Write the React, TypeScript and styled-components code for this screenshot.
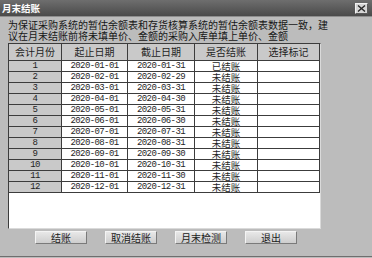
import React from "react";
import styled, { createGlobalStyle } from "styled-components";

const GlobalStyle = createGlobalStyle`
  html, body {
    margin: 0;
    padding: 0;
    background: #bcbcbc;
  }
  body {
    font-family: "Noto Sans CJK SC", "Liberation Sans", sans-serif;
  }
`;

const monthEnds = [31, 29, 31, 30, 31, 30, 31, 31, 30, 31, 30, 31];

const rows = monthEnds.map((end, i) => {
    const mm = String(i + 1).padStart(2, "0");
    return {
        month: i + 1,
        start: `2020-${mm}-01`,
        end: `2020-${mm}-${end}`,
        closed: i === 0,
    };
});

const headers = ["会计月份", "起止日期", "截止日期", "是否结账", "选择标记"];
const buttons = ["结账", "取消结账", "月末检测", "退出"];

const App: React.FC = (): React.ReactElement => {
    return (
        <>
            <GlobalStyle />
            <Window>
                <TitleBar>
                    <Title>月末结账</Title>
                    <CloseButton>
                        <svg width="9" height="7" viewBox="0 0 9 7">
                            <path d="M1 0.5 L8 6.5 M8 0.5 L1 6.5" stroke="#2a2a2a" strokeWidth="1.4" />
                        </svg>
                    </CloseButton>
                </TitleBar>
                <Body>
                    <Intro>
                        为保证采购系统的暂估余额表和存货核算系统的暂估余额表数据一致，建议在月末结账前将未填单价、金额的采购入库单填上单价、金额
                    </Intro>
                    <Panel>
                        <Grid>
                            {headers.map((h) => (
                                <Cell key={h} $shade>
                                    {h}
                                </Cell>
                            ))}
                            {rows.map((r) => (
                                <React.Fragment key={r.month}>
                                    <Cell $shade $mono>
                                        {r.month}
                                    </Cell>
                                    <Cell $mono>{r.start}</Cell>
                                    <Cell $mono>{r.end}</Cell>
                                    <Cell $small>{r.closed ? "已结账" : "未结账"}</Cell>
                                    <Cell />
                                </React.Fragment>
                            ))}
                        </Grid>
                    </Panel>
                    <ButtonRow>
                        {buttons.map((b) => (
                            <Button key={b}>{b}</Button>
                        ))}
                    </ButtonRow>
                </Body>
            </Window>
        </>
    );
};

export default App;

const Window = styled.div`
    width: 372px;
    height: 257px;
    box-sizing: border-box;
    display: flex;
    flex-direction: column;
    background: #bcbcbc;
    border-bottom: 1px solid #6e6e6e;
`;

const TitleBar = styled.div`
    height: 17px;
    box-sizing: border-box;
    display: flex;
    align-items: center;
    justify-content: space-between;
    padding: 0 4px 0 2px;
    background: linear-gradient(#6e6e6e, #4a4a4a);
    border-bottom: 1px solid #8e8e8e;
`;

const Title = styled.span`
    color: #fff;
    font-size: 9.5px;
    font-weight: bold;
    line-height: 12px;
`;

const CloseButton = styled.div`
    width: 13px;
    height: 11px;
    box-sizing: border-box;
    display: flex;
    align-items: center;
    justify-content: center;
    background: #d6d6d6;
    border: 1px solid;
    border-color: #f2f2f2 #5a5a5a #5a5a5a #f2f2f2;
`;

const Body = styled.div`
    display: flex;
    flex-direction: column;
    padding: 2px 0 0 8px;
`;

const Intro = styled.p`
    margin: 0;
    width: 326px;
    font-size: 10px;
    line-height: 11px;
    color: #161616;
`;

const Panel = styled.div`
    margin-top: 2px;
    width: 313px;
    height: 186px;
    box-sizing: border-box;
    background: #fff;
    border: 1px solid;
    border-color: #3c3c3c #dadada #dadada #3c3c3c;
`;

const Grid = styled.div`
    display: grid;
    grid-template-columns: 53px 66px 67px 63px 62px;
    grid-template-rows: 17px;
    grid-auto-rows: 11px;
`;

const Cell = styled.div<{ $shade?: boolean; $mono?: boolean; $small?: boolean }>`
    box-sizing: border-box;
    display: flex;
    align-items: center;
    justify-content: center;
    border-right: 1px solid #3c3c3c;
    border-bottom: 1px solid #3c3c3c;
    background: ${(p) => (p.$shade ? "#c9c9c9" : "#fff")};
    color: #1e1e1e;
    font-family: ${(p) =>
        p.$mono ? '"Liberation Mono", monospace' : '"Noto Sans CJK SC", sans-serif'};
    font-size: ${(p) => (p.$mono ? "9px" : p.$small ? "9.5px" : "10px")};
    letter-spacing: ${(p) => (p.$mono ? "-0.6px" : "0")};
    line-height: 10px;
    white-space: nowrap;
`;

const ButtonRow = styled.div`
    display: flex;
    gap: 18px;
    margin-top: 2px;
    padding-left: 27px;
`;

const Button = styled.button`
    width: 52px;
    height: 13px;
    box-sizing: border-box;
    padding: 0;
    border: 1px solid;
    border-color: #f4f4f4 #7a7a7a #7a7a7a #f4f4f4;
    background: linear-gradient(#e8e8e8, #cdcdcd);
    color: #1a1a1a;
    font-family: "Noto Sans CJK SC", sans-serif;
    font-size: 10px;
    line-height: 11px;
`;
